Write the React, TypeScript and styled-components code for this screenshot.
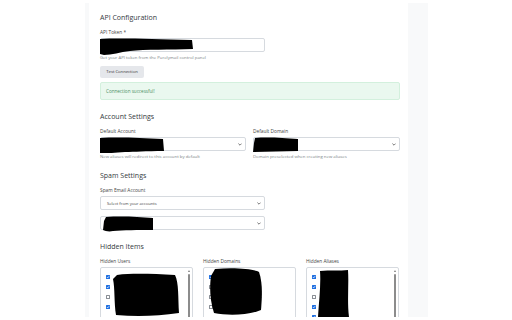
import styled, { createGlobalStyle } from 'styled-components';

const GlobalStyle = createGlobalStyle`
	html, body {
		margin: 0;
		padding: 0;
		background: #ffffff;
		font-family: 'Open Sans', 'Liberation Sans', sans-serif;
		color: #333;
	}
`;

type Blob = { w: number; h: number; x: number; y: number; d: string };

const Redact = ({ blob }: { blob: Blob }) => (
	<StRedact
		width={blob.w}
		height={blob.h}
		viewBox={`0 0 ${blob.w} ${blob.h}`}
		style={{ left: blob.x, top: blob.y }}
	>
		<path d={blob.d} fill="#000" />
	</StRedact>
);

const Chevron = () => (
	<svg width="4" height="3" viewBox="0 0 4 3">
		<path d="M0.4 0.6 L2 2.2 L3.6 0.6" stroke="#555" strokeWidth="0.8" fill="none" />
	</svg>
);

const SelectBox = ({ text, blob }: { text?: string; blob?: Blob }) => (
	<StSelect>
		<StSelectText>{text}</StSelectText>
		<Chevron />
		{blob && <Redact blob={blob} />}
	</StSelect>
);

const Check = ({ checked }: { checked: boolean }) => (
	<StCheck $checked={checked}>
		{checked && (
			<svg width="4" height="4" viewBox="0 0 4 4">
				<path d="M0.8 2 L1.7 2.9 L3.2 1.1" stroke="#fff" strokeWidth="0.7" fill="none" />
			</svg>
		)}
	</StCheck>
);

const HiddenList = ({
	title,
	items,
	scroll,
	blob,
}: {
	title: string;
	items: boolean[];
	scroll: boolean;
	blob: Blob;
}) => (
	<div>
		<StLabel>{title}</StLabel>
		<StListBox>
			<StList>
				{items.map((c, i) => (
					<StListRow key={i}>
						<Check checked={c} />
					</StListRow>
				))}
			</StList>
			{scroll && (
				<StScroll>
					<StArrow />
					<StThumb />
				</StScroll>
			)}
			<Redact blob={blob} />
		</StListBox>
	</div>
);

const App = () => {
	return (
		<>
			<GlobalStyle />
			<StFrame>
				<StCard>
					<StSection>
						<StTitle>API Configuration</StTitle>
						<StLabel>API Token *</StLabel>
						<StInput $width={165}>
							<Redact
								blob={{
									w: 93,
									h: 18,
									x: -1,
									y: -1,
									d: 'M0 1 C20 0 50 1 92 2 L93 11 C70 12 45 11 30 13 C20 14 12 17 4 17 L0 16 Z',
								}}
							/>
						</StInput>
						<StHelp>Get your API token from the Purelymail control panel</StHelp>
						<StButton>Test Connection</StButton>
						<StAlert>Connection successful!</StAlert>
					</StSection>

					<StSection>
						<StTitle>Account Settings</StTitle>
						<StTwoCol>
							<div>
								<StLabel>Default Account</StLabel>
								<SelectBox
									blob={{
										w: 64,
										h: 17,
										x: -1,
										y: -1,
										d: 'M0 1 C20 0 40 1 63 2 L64 14 C45 14 35 15 25 15 C15 16 8 16 0 16 Z',
									}}
								/>
								<StHelp>New aliases will redirect to this account by default</StHelp>
							</div>
							<div>
								<StLabel>Default Domain</StLabel>
								<SelectBox
									blob={{
										w: 46,
										h: 16,
										x: -1,
										y: -1,
										d: 'M2 1 C15 0 30 1 45 2 L45 14 C30 14 15 15 0 15 L1 6 Z',
									}}
								/>
								<StHelp>Domain preselected when creating new aliases</StHelp>
							</div>
						</StTwoCol>
					</StSection>

					<StSection>
						<StTitle>Spam Settings</StTitle>
						<StLabel>Spam Email Account</StLabel>
						<StNarrow>
							<SelectBox text="Select from your accounts" />
							<StSpacer />
							<SelectBox
								blob={{
									w: 50,
									h: 16,
									x: 2,
									y: -1,
									d: 'M3 1 C20 0 35 1 50 2 L50 14 C35 14 20 14 10 15 C6 16 2 15 0 14 L1 5 Z',
								}}
							/>
						</StNarrow>
					</StSection>

					<StSection>
						<StTitle>Hidden Items</StTitle>
						<StThreeCol>
							<HiddenList
								title="Hidden Users"
								items={[true, true, false, true]}
								scroll
								blob={{
									w: 66,
									h: 44,
									x: 12,
									y: 5,
									d: 'M4 2 C20 0 40 1 62 2 C66 10 65 25 66 40 C45 43 25 44 3 42 C1 30 2 15 0 6 Z',
								}}
							/>
							<HiddenList
								title="Hidden Domains"
								items={[true, false, false, false]}
								scroll={false}
								blob={{
									w: 54,
									h: 48,
									x: 5,
									y: 0,
									d: 'M6 1 C25 -1 45 1 50 4 C54 15 53 30 52 42 C40 47 20 48 5 45 C0 30 1 15 2 8 Z',
								}}
							/>
							<HiddenList
								title="Hidden Aliases"
								items={[true, true, false, true, true]}
								scroll
								blob={{
									w: 32,
									h: 48,
									x: 11,
									y: 2,
									d: 'M2 1 C12 0 22 1 30 0 C31 15 29 30 31 47 C20 48 10 47 0 47 C1 30 3 15 2 1 Z',
								}}
							/>
						</StThreeCol>
					</StSection>
				</StCard>
			</StFrame>
		</>
	);
};

export default App;

const StFrame = styled.div`
	margin: 3px 0 0 85px;
	width: 343px;
	height: 314px;
	background: #f8f9fa;
	padding-left: 4px;
	box-sizing: border-box;
	overflow: hidden;
`;

const StCard = styled.div`
	width: 319px;
	min-height: 100%;
	background: #ffffff;
	padding: 10px 8px 0 11px;
	box-sizing: border-box;
`;

const StSection = styled.div`
	margin-bottom: 12px;
`;

const StTitle = styled.div`
	font-size: 7px;
	line-height: 10px;
	font-weight: 500;
	color: #343a40;
	margin-bottom: 6px;
`;

const StLabel = styled.div`
	font-size: 4.8px;
	line-height: 6px;
	color: #444;
	margin-bottom: 3px;
`;

const StHelp = styled.div`
	font-size: 4.3px;
	line-height: 5px;
	color: #7a7f85;
	margin-top: 3px;
	white-space: nowrap;
`;

const StInput = styled.div<{ $width: number }>`
	position: relative;
	width: ${(p) => p.$width}px;
	height: 14px;
	border: 0.5px solid #d6dadf;
	border-radius: 2px;
	box-sizing: border-box;
	background: #fff;
`;

const StRedact = styled.svg`
	position: absolute;
	display: block;
`;

const StButton = styled.div`
	margin-top: 6px;
	width: 44px;
	height: 12px;
	border-radius: 2px;
	background: #e5e7eb;
	font-size: 4.2px;
	line-height: 12px;
	text-align: center;
	color: #333;
`;

const StAlert = styled.div`
	margin-top: 4px;
	height: 18px;
	background: #eaf8ef;
	border: 0.5px solid #d3f0dd;
	border-radius: 2px;
	box-sizing: border-box;
	padding-left: 5px;
	font-size: 4.6px;
	line-height: 17px;
	color: #4c8f63;
`;

const StTwoCol = styled.div`
	display: grid;
	grid-template-columns: 146px 147px;
	column-gap: 7px;
	margin-top: 1px;
`;

const StSelect = styled.div`
	position: relative;
	height: 14px;
	border: 0.5px solid #d6dadf;
	border-radius: 2px;
	box-sizing: border-box;
	background: #fff;
	display: flex;
	align-items: center;
	justify-content: space-between;
	padding: 0 3px 0 6px;
`;

const StSelectText = styled.span`
	font-size: 4.1px;
	color: #444;
`;

const StNarrow = styled.div`
	width: 165px;
`;

const StSpacer = styled.div`
	height: 6px;
`;

const StThreeCol = styled.div`
	display: grid;
	grid-template-columns: repeat(3, 93px);
	column-gap: 10px;
`;

const StListBox = styled.div`
	position: relative;
	height: 60px;
	border: 0.5px solid #d6dadf;
	border-radius: 2px;
	box-sizing: border-box;
	display: flex;
	overflow: hidden;
`;

const StList = styled.div`
	flex: 1;
	padding: 4px 0 0 5px;
`;

const StListRow = styled.div`
	height: 10px;
	display: flex;
	align-items: center;
`;

const StCheck = styled.span<{ $checked: boolean }>`
	width: 4px;
	height: 4px;
	box-sizing: border-box;
	border-radius: 0.6px;
	background: ${(p) => (p.$checked ? '#1f6fe0' : '#fff')};
	border: ${(p) => (p.$checked ? 'none' : '0.5px solid #8a8f96')};
	display: flex;
	align-items: center;
	justify-content: center;
`;

const StScroll = styled.div`
	width: 4px;
	margin-right: 1px;
	display: flex;
	flex-direction: column;
	align-items: center;
	padding-top: 2px;
`;

const StArrow = styled.div`
	width: 0;
	height: 0;
	border-left: 1.3px solid transparent;
	border-right: 1.3px solid transparent;
	border-bottom: 2px solid #777;
`;

const StThumb = styled.div`
	margin-top: 2px;
	width: 2.4px;
	flex: 1;
	background: #8c8c8c;
	border-radius: 1px;
`;
